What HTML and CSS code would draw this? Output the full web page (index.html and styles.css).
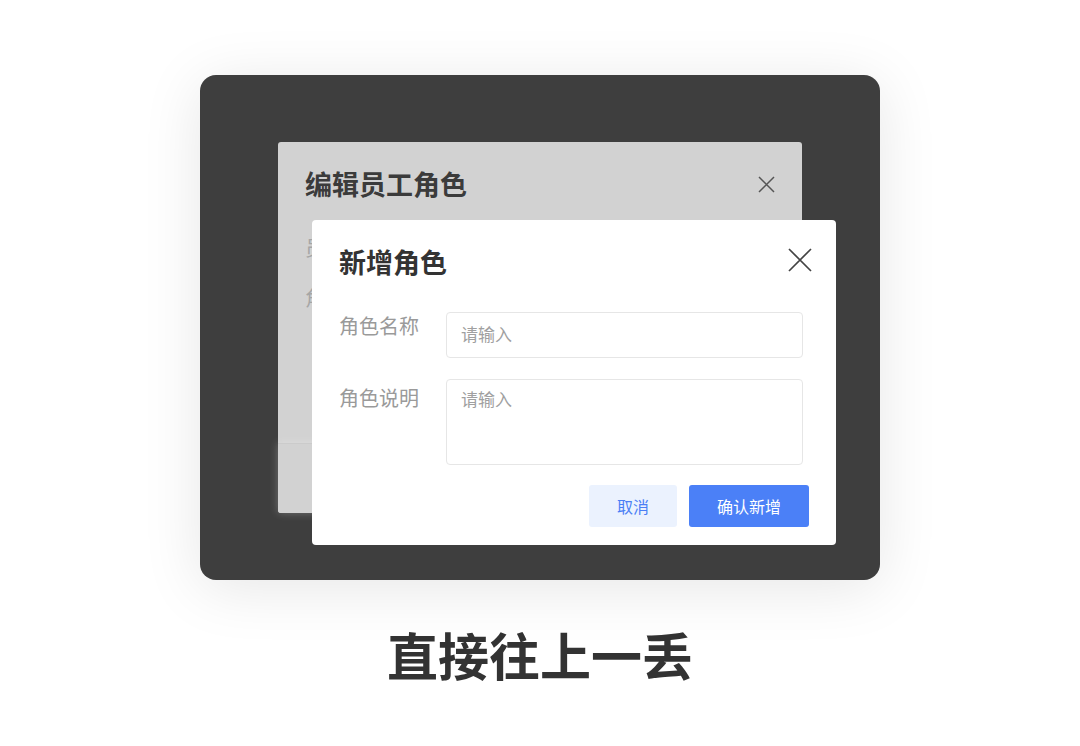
FILE: index.html
```html
<!DOCTYPE html>
<html lang="zh-CN">
<head>
<meta charset="utf-8">
<link rel="stylesheet" href="styles.css">
</head>
<body>
<main class="page">
  <section class="stage">
    <div class="dialog-back">
      <div class="back-header">
        <h2 class="back-title">编辑员工角色</h2>
        <svg class="back-close" width="17" height="17" viewBox="0 0 17 17"><path d="M1 1L16 16M16 1L1 16" stroke="#555" stroke-width="1.5" fill="none"/></svg>
      </div>
      <div class="back-body">
        <div class="back-label">员</div>
        <div class="back-label">角</div>
      </div>
      <div class="back-footer"></div>
    </div>
    <div class="dialog-front">
      <div class="front-header">
        <h2 class="front-title">新增角色</h2>
        <svg class="front-close" width="24" height="24" viewBox="0 0 24 24"><path d="M1 1L23 23M23 1L1 23" stroke="#444" stroke-width="1.7" fill="none"/></svg>
      </div>
      <div class="form-row row-name">
        <label class="form-label">角色名称</label>
        <div class="field field-input">请输入</div>
      </div>
      <div class="form-row row-desc">
        <label class="form-label">角色说明</label>
        <div class="field field-area">请输入</div>
      </div>
      <div class="actions">
        <button class="btn btn-cancel">取消</button>
        <button class="btn btn-primary">确认新增</button>
      </div>
    </div>
  </section>
  <h1 class="caption">直接往上一丢</h1>
</main>
</body>
</html>
```

FILE: styles.css
```css
* { box-sizing: border-box; }
html, body { margin: 0; padding: 0; background: #fff; }
body {
  font-family: "Noto Sans CJK SC", "Noto Sans", sans-serif;
  width: 1080px;
  height: 746px;
  overflow: hidden;
}
.page {
  display: flex;
  flex-direction: column;
  align-items: center;
  padding-top: 75px;
}
.stage {
  position: relative;
  width: 680px;
  height: 505px;
  background: #3e3e3e;
  border-radius: 16px;
  box-shadow: 0 8px 60px rgba(0, 0, 0, 0.10);
  padding: 67px 0 0 78px;
}
.dialog-back {
  width: 524px;
  height: 371px;
  background: #d2d2d2;
  border-radius: 3px;
  display: flex;
  flex-direction: column;
}
.back-header {
  display: flex;
  justify-content: space-between;
  align-items: center;
  padding: 24px 27px 0 27px;
}
.back-title {
  margin: 0;
  font-size: 27px;
  line-height: 36px;
  font-weight: 700;
  color: #3b3b3b;
}
.back-body {
  flex: 1;
  padding: 32px 27px 0;
  display: flex;
  flex-direction: column;
  gap: 22px;
}
.back-label {
  font-size: 20px;
  line-height: 28px;
  color: #a6a6a6;
}
.back-footer {
  height: 70px;
  background: #d2d2d2;
  border-radius: 0 0 3px 3px;
  border-top: 1px solid rgba(0, 0, 0, 0.03);
  box-shadow: 0 0 9px rgba(255, 255, 255, 0.28);
}
.dialog-front {
  position: absolute;
  left: 112px;
  top: 145px;
  width: 524px;
  height: 325px;
  background: #fff;
  border-radius: 4px;
  padding: 24px 27px 18px 27px;
  display: flex;
  flex-direction: column;
}
.front-header {
  display: flex;
  justify-content: space-between;
  align-items: flex-start;
}
.front-title {
  margin: 0;
  font-size: 27px;
  line-height: 36px;
  font-weight: 700;
  color: #333;
}
.front-close {
  margin-top: 4px;
  margin-right: -3px;
}
.form-row {
  display: flex;
  align-items: flex-start;
  margin-right: 6px;
}
.row-name { margin-top: 32px; }
.row-desc { margin-top: 21px; }
.form-label {
  width: 107px;
  flex: none;
  font-size: 20px;
  line-height: 28px;
  color: #9a9a9a;
}
.row-desc .form-label { margin-top: 5px; }
.field {
  flex: 1;
  border: 1px solid #e6e6e6;
  border-radius: 4px;
  font-size: 17px;
  color: #a0a0a0;
  padding-left: 14px;
}
.field-input {
  height: 46px;
  line-height: 42px;
}
.field-area {
  height: 86px;
  line-height: 24px;
  padding-top: 7px;
}
.actions {
  margin-top: 20px;
  display: flex;
  justify-content: flex-end;
  gap: 12px;
}
.btn {
  height: 42px;
  border: none;
  border-radius: 3px;
  font-family: inherit;
  font-size: 16px;
  padding: 0;
}
.btn-cancel {
  width: 88px;
  background: #ebf2fe;
  color: #4a7ef5;
}
.btn-primary {
  width: 120px;
  background: #4b80f7;
  color: #fff;
}
.caption {
  margin: 44px 0 0;
  font-size: 51px;
  line-height: 60px;
  font-weight: 700;
  color: #333;
}
```
